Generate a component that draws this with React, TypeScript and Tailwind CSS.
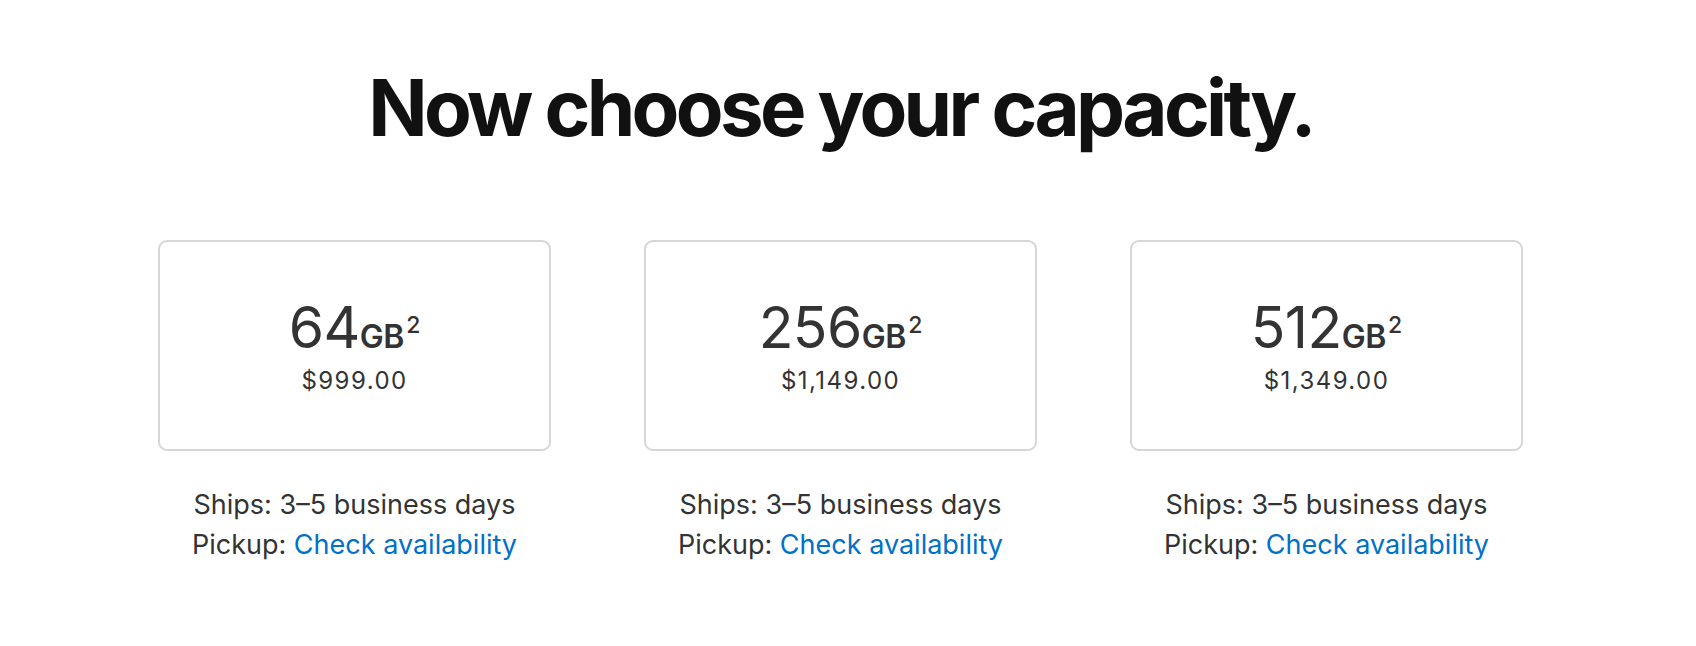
const options = [
  { size: "64", price: "$999.00" },
  { size: "256", price: "$1,149.00" },
  { size: "512", price: "$1,349.00" },
]

function CapacityCard({ size, price }: { size: string; price: string }) {
  return (
    <div className="flex w-[393px] flex-col items-center">
      <button className="flex h-[211px] w-full flex-col items-center justify-center rounded-[9px] border-2 border-[#d6d6d6] bg-white pt-[4px] text-[#333]">
        <span className="flex items-baseline leading-[56px]">
          <span className="text-[57px] font-normal tracking-[-0.01em]">{size}</span>
          <span className="text-[32px] font-semibold tracking-[-0.01em]">GB</span>
          <sup className="top-[-0.62em] ml-[2px] text-[23px] font-medium">2</sup>
        </span>
        <span className="mt-[1px] text-[24px] leading-[30px] tracking-[0.06em]">{price}</span>
      </button>
      <div className="mt-[34px] text-center text-[27px] leading-[40px] text-[#333]">
        <p>Ships: 3–5 business days</p>
        <p>
          Pickup: <a className="text-[#0070c9]">Check availability</a>
        </p>
      </div>
    </div>
  )
}

export default function App() {
  return (
    <div
      className="h-[646px] w-full bg-white pr-[15px]"
      style={{ fontFamily: "Inter, 'Liberation Sans', sans-serif" }}
    >
      <div className="flex flex-col items-center pt-[68px]">
        <h1 className="text-[78px] font-bold leading-[80px] tracking-[-0.047em] text-[#111]">
          Now choose your capacity.
        </h1>
        <div className="mt-[92px] flex gap-[93px]">
          {options.map((o) => (
            <CapacityCard key={o.size} size={o.size} price={o.price} />
          ))}
        </div>
      </div>
    </div>
  )
}
